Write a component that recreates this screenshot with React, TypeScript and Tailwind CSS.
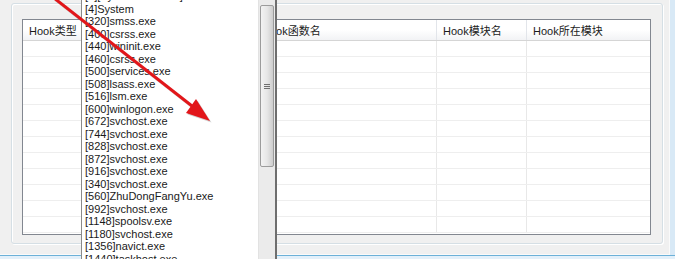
import React from "react";

const items = [
  "[0][System Process]",
  "[4]System",
  "[320]smss.exe",
  "[400]csrss.exe",
  "[440]wininit.exe",
  "[460]csrss.exe",
  "[500]services.exe",
  "[508]lsass.exe",
  "[516]lsm.exe",
  "[600]winlogon.exe",
  "[672]svchost.exe",
  "[744]svchost.exe",
  "[828]svchost.exe",
  "[872]svchost.exe",
  "[916]svchost.exe",
  "[340]svchost.exe",
  "[560]ZhuDongFangYu.exe",
  "[992]svchost.exe",
  "[1148]spoolsv.exe",
  "[1180]svchost.exe",
  "[1356]navict.exe",
  "[1440]taskhost.exe",
  "[1500]explorer.exe",
];

const rows = Array.from({ length: 12 }, (_, i) => i);

export default function App() {
  return (
    <div className="relative w-[675px] h-[259px] overflow-hidden bg-[#f0f0f0] font-['Liberation_Sans','Noto_Sans_CJK_SC',sans-serif] text-[11px] text-[#1b1b1b]">
      <div className="flex h-[255px]">
        <div className="w-[670px] h-full pl-[11px] pt-[3px] border-r border-b border-[#fafafa]">
          <div className="w-[652px] h-[241px] rounded-[3px] border border-[#d5dfe5] shadow-[inset_1px_1px_0_#ffffff,1px_1px_0_#ffffff] pl-[10px] pt-[15px]">
            <div className="w-[629px] h-[216px] border border-[#828790] bg-white flex flex-col overflow-hidden">
              <div className="flex h-[21px] shrink-0 border-b border-[#d5d5d5] bg-gradient-to-b from-white via-white to-[#f2f3f5] leading-[14px]">
                <div className="w-[233px] border-r border-[#e2e5ea] pl-[6px] pt-[4px] whitespace-nowrap">Hook类型</div>
                <div className="w-[181px] border-r border-[#e2e5ea] pl-[6px] pt-[4px] whitespace-nowrap">Hook函数名</div>
                <div className="w-[90px] border-r border-[#e2e5ea] pl-[6px] pt-[4px] whitespace-nowrap">Hook模块名</div>
                <div className="flex-1 pl-[6px] pt-[4px] whitespace-nowrap">Hook所在模块</div>
              </div>
              <div className="flex flex-col">
                {rows.map((r) => (
                  <div key={r} className="flex h-[16px] shrink-0 border-b border-[#eeeeee]">
                    <div className="w-[233px] border-r border-[#e8e8e8]" />
                    <div className="w-[181px] border-r border-[#e8e8e8]" />
                    <div className="w-[90px] border-r border-[#e8e8e8]" />
                    <div className="flex-1" />
                  </div>
                ))}
              </div>
            </div>
          </div>
        </div>
        <div className="flex-1 bg-[#d8e9f6]" />
      </div>
      <div className="h-[4px] border-t border-[#6cb1d8] bg-[#e3f0fa]" />

      {/* dropdown list overlay */}
      <div className="absolute left-[81px] top-[-10px] w-[196px] h-[290px] flex bg-white border-l border-[#8a8a8a] border-r-2 border-r-[#6e6e6e]">
        <div className="flex-1 pl-[3px] leading-[12.5px] whitespace-nowrap overflow-hidden text-[#1a1a1a]">
          {items.map((t) => (
            <div key={t} className="h-[12.5px]">{t}</div>
          ))}
        </div>
        <div className="w-[17px] bg-[#ebebeb] border-l border-[#e2e2e2] pt-[15px]">
          <div className="ml-[1px] w-[14px] h-[162px] rounded-[2px] border border-[#9c9c9c] bg-gradient-to-r from-[#f3f3f3] via-[#e7e7e7] to-[#cdcdcd] flex flex-col items-center justify-center gap-[1px]">
            <div className="w-[6px] h-[1px] bg-[#707070]" />
            <div className="w-[6px] h-[1px] bg-[#707070]" />
            <div className="w-[6px] h-[1px] bg-[#707070]" />
          </div>
        </div>
      </div>

      {/* red annotation arrow */}
      <svg className="absolute left-0 top-0 pointer-events-none" width="675" height="259" viewBox="0 0 675 259">
        <g opacity="0.25" transform="translate(1.5,1.5)">
          <line x1="54" y1="-2" x2="192" y2="106" stroke="#555" strokeWidth="3" />
          <polygon points="210,121 186,113 196,99" fill="#555" />
        </g>
        <line x1="54" y1="-2" x2="192" y2="106" stroke="#e2161a" strokeWidth="3" />
        <polygon points="210,121 186,113 196,99" fill="#e2161a" />
      </svg>
    </div>
  );
}
